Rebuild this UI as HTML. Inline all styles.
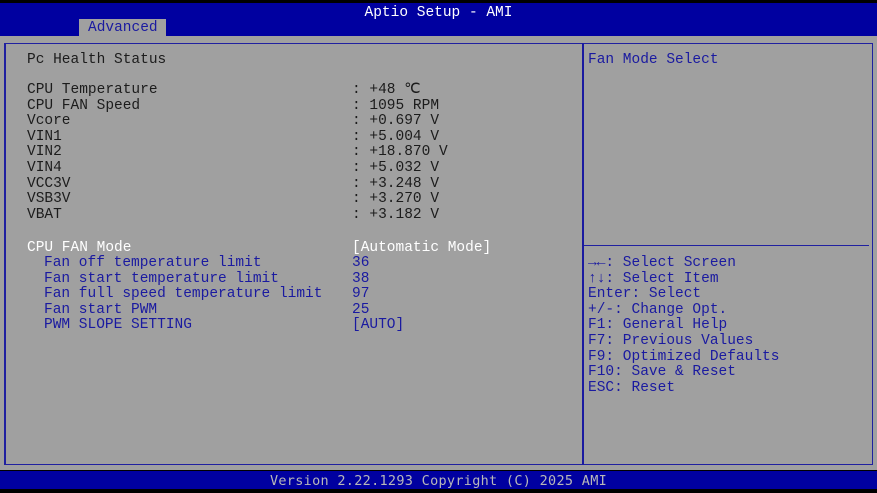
<!DOCTYPE html>
<html><head><style>
body{margin:0;width:877px;height:493px;background:#000;position:relative;overflow:hidden;font-family:"Liberation Mono","DejaVu Sans Mono",monospace;font-size:14.5px}
.a{position:absolute;white-space:pre;line-height:16px}
.k{color:#1c1c1c}.w{color:#fff}.b{color:#1a1aa0}
</style></head><body>
<div style="position:absolute;left:0;top:3px;width:877px;height:33px;background:#0000a0"></div>
<div class="a w" style="left:0;width:877px;text-align:center;top:5px">Aptio Setup - AMI</div>
<div style="position:absolute;left:79px;top:19px;width:87px;height:17px;background:#a0a0a0"></div>
<div class="a" style="left:88px;top:20px;color:#1a1aa0">Advanced</div>
<div style="position:absolute;left:0;top:36px;width:877px;height:434px;background:#a0a0a0"></div>
<div style="position:absolute;left:4px;top:43px;width:866px;height:420px;border:1px solid #2020a0;border-left:2px solid #2020a0"></div>
<div style="position:absolute;left:582px;top:43px;width:2px;height:422px;background:#1a1aa0"></div>
<div style="position:absolute;left:584px;top:245px;width:285px;height:1px;background:#2020a0"></div>
<div class="a k" style="left:27px;top:52px">Pc Health Status</div>
<div class="a k" style="left:27px;top:83px;line-height:15.6px">CPU Temperature
CPU FAN Speed
Vcore
VIN1
VIN2
VIN4
VCC3V
VSB3V
VBAT</div>
<div class="a k" style="left:352px;top:83px;line-height:15.6px">: +48 ℃
: 1095 RPM
: +0.697 V
: +5.004 V
: +18.870 V
: +5.032 V
: +3.248 V
: +3.270 V
: +3.182 V</div>
<div class="a w" style="left:27px;top:240px">CPU FAN Mode</div>
<div class="a w" style="left:352px;top:240px">[Automatic Mode]</div>
<div class="a b" style="left:44px;top:256px;line-height:15.6px">Fan off temperature limit
Fan start temperature limit
Fan full speed temperature limit
Fan start PWM
PWM SLOPE SETTING</div>
<div class="a b" style="left:352px;top:256px;line-height:15.6px">36
38
97
25
[AUTO]</div>
<div class="a b" style="left:588px;top:52px">Fan Mode Select</div>
<div class="a b" style="left:588px;top:256px;line-height:15.6px"><b>→←</b>: Select Screen
<b>↑↓</b>: Select Item
Enter: Select
+/-: Change Opt.
F1: General Help
F7: Previous Values
F9: Optimized Defaults
F10: Save &amp; Reset
ESC: Reset</div>
<div style="position:absolute;left:0;top:471px;width:877px;height:18px;background:#0000a0"></div>
<div class="a" style="left:0;width:877px;text-align:center;top:473px;color:#b8b8b8;font-family:'Liberation Sans Narrow','DejaVu Sans Mono',monospace;font-size:13.5px;letter-spacing:0.3px">Version 2.22.1293 Copyright (C) 2025 AMI</div>
</body></html>
